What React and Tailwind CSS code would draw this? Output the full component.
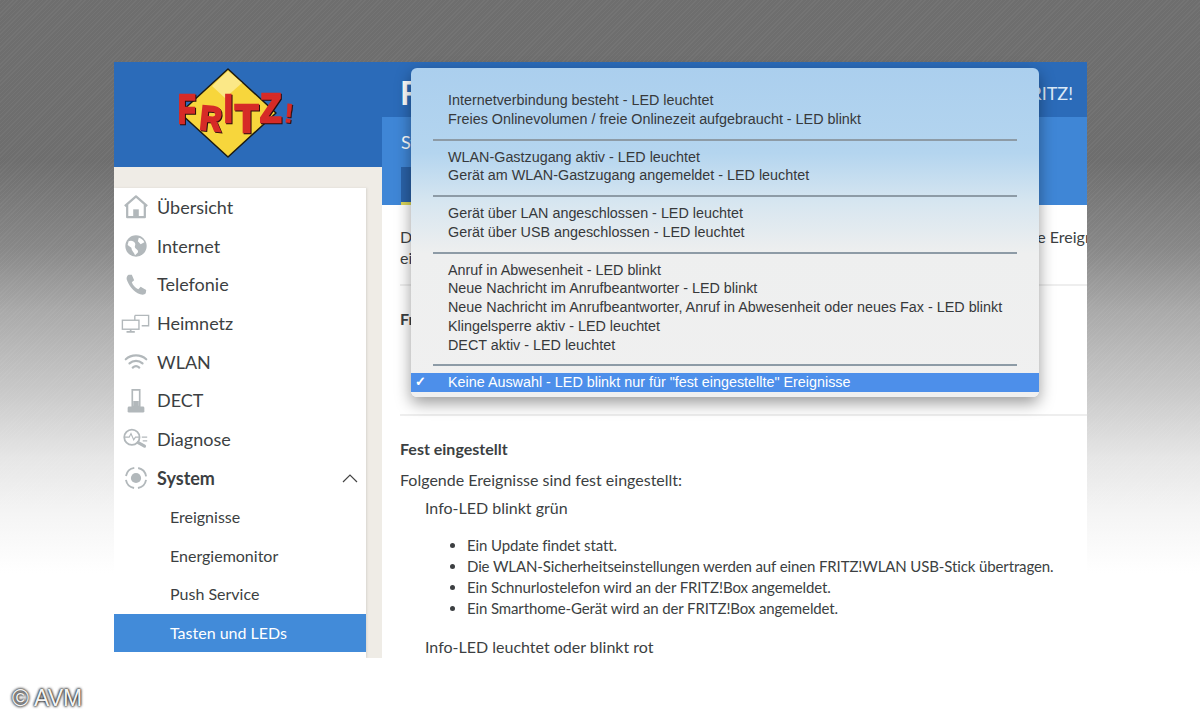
import React from "react";

const ic = "w-[26px] h-[26px] text-[#b2b8bb]";
const Home = () => (
  <svg viewBox="0 0 28 28" className={ic} fill="none" stroke="currentColor" strokeWidth="2.4">
    <path d="M2 13 14 2.500 26 13M4.500 11v14h19V11" strokeLinejoin="round" />
    <path d="M11 25v-8.500h6V25z" fill="currentColor" stroke="none" />
  </svg>
);
const Globe = () => (
  <svg viewBox="0 0 28 28" className={ic}>
    <circle cx="14" cy="14" r="11.500" fill="currentColor" />
    <path d="M6 9c3-1.500 6 0 7 2s-1 3 0 5 4 2 3 5l-3 3c-1-3-4-5-4-8l-4-3zM17 5c2 .500 5 2 6 5l-4 2-3-3z" fill="#fff" />
  </svg>
);
const Phone = () => (
  <svg viewBox="0 0 28 28" className={ic} fill="currentColor">
    <path d="M6 3 9.500 3 12 9l-2.500 2c1.200 3.200 3.500 6 7 7.500L19 16l6 3.500-.5 3.500c-1 1.500-3.500 2-6 1C11 21 6 14 4 8c-.5-2 .5-4 2-5z" />
  </svg>
);
const Net = () => (
  <svg viewBox="0 0 42 28" className="w-[29px] h-[26px] text-[#b2b8bb]" fill="none" stroke="currentColor" strokeWidth="2">
    <path d="M20 3h20v15H30" />
    <path d="M20 3v7" />
    <rect x="2" y="10" width="24" height="13" fill="#fff" />
    <path d="M14 23v3M8 27h12" strokeWidth="2.500" />
  </svg>
);
const Wifi = () => (
  <svg viewBox="0 0 28 28" className={ic} fill="none" stroke="currentColor" strokeWidth="2.400" strokeLinecap="round">
    <path d="M3 11c6-5.500 16-5.500 22 0M7 15.500c4-3.500 10-3.500 14 0M10.500 20c2-1.700 5-1.700 7 0" />
  </svg>
);
const Dect = () => (
  <svg viewBox="0 0 28 28" className={ic} fill="none" stroke="currentColor" strokeWidth="1.800">
    <path d="M10 2h8v18h-8z" />
    <rect x="5" y="20" width="18" height="6.500" rx="1.500" fill="currentColor" stroke="none" />
    <rect x="11" y="14" width="6" height="6" fill="currentColor" stroke="none" />
  </svg>
);
const Diag = () => (
  <svg viewBox="0 0 30 28" className="w-[27px] h-[26px] text-[#b2b8bb]" fill="none" stroke="currentColor" strokeWidth="2">
    <circle cx="11" cy="12" r="8.500" />
    <path d="M3 12h5l2-4 3 7 2-3h5" strokeWidth="1.300" />
    <path d="m18 18 7 4" strokeWidth="3.500" strokeLinecap="round" />
    <path d="M22 12h6M23 16h5" strokeWidth="1.300" />
  </svg>
);
const Sys = () => (
  <svg viewBox="0 0 28 28" className={ic} fill="none" stroke="currentColor">
    <circle cx="14" cy="14" r="5.500" fill="currentColor" stroke="none" />
    <circle cx="14" cy="14" r="11" strokeWidth="2" strokeDasharray="13 4.300" strokeDashoffset="-2" />
  </svg>
);

const items = [
  ["Übersicht", Home],
  ["Internet", Globe],
  ["Telefonie", Phone],
  ["Heimnetz", Net],
  ["WLAN", Wifi],
  ["DECT", Dect],
  ["Diagnose", Diag],
];

const groups = [
  ["Internetverbindung besteht - LED leuchtet", "Freies Onlinevolumen / freie Onlinezeit aufgebraucht - LED blinkt"],
  ["WLAN-Gastzugang aktiv - LED leuchtet", "Gerät am WLAN-Gastzugang angemeldet - LED leuchtet"],
  ["Gerät über LAN angeschlossen - LED leuchtet", "Gerät über USB angeschlossen - LED leuchtet"],
  [
    "Anruf in Abwesenheit - LED blinkt",
    "Neue Nachricht im Anrufbeantworter - LED blinkt",
    "Neue Nachricht im Anrufbeantworter, Anruf in Abwesenheit oder neues Fax - LED blinkt",
    "Klingelsperre aktiv - LED leuchtet",
    "DECT aktiv - LED leuchtet",
  ],
];

const L = ({ x, y, s, sx, r = 0, c, w }) => (
  <text transform={`translate(${x} ${y}) rotate(${r}) scale(${sx} 1)`} fontSize={s} strokeWidth={w}>{c}</text>
);

const Logo = () => (
  <svg viewBox="0 0 130 100" className="w-[130px] h-[100px]">
    <path d="M58 7 106 51 58 95 10 51z" fill="#f7d63c" stroke="#1c1a12" strokeWidth="1.500" strokeLinejoin="round" />
    <path d="M58 9 72 21 55 36 42 24z" fill="#fbe887" />
    <g
      className="drop-shadow-[1.500px_1.500px_0_#2b0d0d]"
      fontFamily="'Liberation Sans', sans-serif"
      fontWeight="700"
      fill="#d62b27"
      stroke="#d62b27"
      strokeWidth="2.400"
    >
      <L x={8} y={61} s={40} sx={0.72} c="F" />
      <L x={29} y={67} s={34} sx={0.88} r={6} c="R" />
      <L x={54} y={60} s={39} sx={0.8} c="I" />
      <L x={65} y={70} s={38} sx={1} c="T" />
      <L x={90} y={60} s={40} sx={0.88} c="Z" />
      <L x={113} y={60} s={27} sx={1.1} r={6} w={0.4} c="!" />
    </g>
  </svg>
);

export default function App() {
  return (
    <div className="relative w-[1200px] h-[720px] overflow-hidden pl-[114px] pt-[62px] bg-[repeating-linear-gradient(135deg,rgba(255,255,255,0.045)_0px,rgba(255,255,255,0.045)_1px,transparent_1px,transparent_3px),linear-gradient(180deg,#6e6e6e_0px,#6e6e6e_160px,#888888_248px,#aaaaaa_312px,#c8c8c8_390px,#e6e6e6_458px,#f5f5f5_514px,#ffffff_573px)] font-['Lato','Open_Sans',sans-serif]">
      <div className="w-[973px] h-[596px] flex flex-col bg-white overflow-hidden text-[#3c3f42]">
        <div className="h-[55px] shrink-0 bg-[#2b6bb9] flex">
          <div className="w-[268px] shrink-0" />
          <div className="flex-1 flex items-center justify-between pl-[18px] pr-[14px] pt-[7px] text-white">
            <span className="text-[32px] font-bold leading-none">FRITZ!Box 7590</span>
            <span className="text-[18px] text-[#dbe9f7]">MyFRITZ!</span>
          </div>
        </div>
        <div className="flex flex-1 min-h-0">
          <div className="w-[268px] shrink-0 flex flex-col -mt-[55px] relative">
            <div className="h-[105px] shrink-0 bg-[#2b6bb9] flex items-start pl-[56px]">
              <Logo />
            </div>
            <div className="flex-1 bg-[#efece6] pt-[21px] pr-[16px]">
              <div className="bg-white h-full text-[18px] shadow-[1px_0_2px_#d8d5cf]">
                {items.map(([t, I]) => (
                  <div key={t} className="h-[38.7px] flex items-center">
                    <div className="w-[43px] flex justify-center shrink-0"><I /></div>
                    <span>{t}</span>
                  </div>
                ))}
                <div className="h-[38.7px] flex items-center font-bold">
                  <div className="w-[43px] flex justify-center shrink-0"><Sys /></div>
                  <span className="flex-1">System</span>
                  <svg viewBox="0 0 16 10" className="w-[16px] h-[10px] mr-[8px]" fill="none" stroke="#444" strokeWidth="1.200"><path d="m1 9 7-7 7 7" /></svg>
                </div>
                <div className="text-[16px]">
                  <div className="h-[38.7px] flex items-center pl-[56px]">Ereignisse</div>
                  <div className="h-[38.7px] flex items-center pl-[56px]">Energiemonitor</div>
                  <div className="h-[38.7px] flex items-center pl-[56px]">Push Service</div>
                  <div className="h-[38.7px] flex items-center pl-[56px] bg-[#428bd9] text-white">Tasten und LEDs</div>
                </div>
              </div>
            </div>
          </div>
          <div className="flex-1 min-w-0 flex flex-col">
            <div className="h-[88px] shrink-0 bg-[#3f86d6] pl-[19px] flex flex-col text-white">
              <div className="h-[50px] flex items-center text-[18px]">System</div>
              <div className="w-[120px] flex-1 bg-[#2a62a8] border-b-[3px] border-[#dcd65a]" />
            </div>
            <div className="pl-[18px] text-[16px] overflow-hidden flex-1">
              <div className="pt-[21px] pb-[16px] border-b-2 border-[#eeeeee] leading-[21px]">
                <div className="whitespace-nowrap">Die Info-LED der FRITZ!Box kann verschiedene Zustände anzeigen und hier über festgelegte Ereignisse</div>
                <div className="whitespace-nowrap">eine Rückmeldung geben.</div>
              </div>
              <div className="h-[130px] border-b-2 border-[#eeeeee] pt-[21px] font-bold">Frei einstellbar</div>
              <div className="pt-[22px] font-bold leading-[21px]">Fest eingestellt</div>
              <div className="pt-[10px] leading-[21px]">Folgende Ereignisse sind fest eingestellt:</div>
              <div className="pl-[25px] pt-[7px] leading-[21px]">
                <div>Info-LED blinkt grün</div>
                <ul className="list-disc pl-[42px] pt-[17px] text-[15px] tracking-[-0.12px]">
                  <li>Ein Update findet statt.</li>
                  <li>Die WLAN-Sicherheitseinstellungen werden auf einen FRITZ!WLAN USB-Stick übertragen.</li>
                  <li>Ein Schnurlostelefon wird an der FRITZ!Box angemeldet.</li>
                  <li>Ein Smarthome-Gerät wird an der FRITZ!Box angemeldet.</li>
                </ul>
                <div className="pt-[17px]">Info-LED leuchtet oder blinkt rot</div>
              </div>
            </div>
          </div>
        </div>
      </div>

      <div className="absolute left-[411px] top-[68px] w-[628px] h-[329px] rounded-[6px] pt-[23px] bg-[linear-gradient(180deg,#abcfee_0px,#b4d5ef_85px,#d7e6f0_135px,#eeefef_185px,#f0f0f0_100%)] shadow-[0_6px_16px_rgba(0,0,0,0.4)] font-['Liberation_Sans',sans-serif] text-[14.35px] leading-[18.75px] text-[#37393b]">
        {groups.map((g, i) => (
          <div key={i}>
            <div className="pl-[37px]">
              {g.map((l) => <div key={l}>{l}</div>)}
            </div>
            <div className="mx-[22px] mt-[10px] mb-[7px] h-[2px] bg-[#8d9ba6]" />
          </div>
        ))}
        <div className="h-[19px] bg-[#4d8fea] text-white flex items-center">
          <span className="w-[37px] pl-[4px] text-[13px] font-bold">✓</span>
          <span>Keine Auswahl - LED blinkt nur für "fest eingestellte" Ereignisse</span>
        </div>
      </div>

      <div className="absolute left-[12px] top-[685px] font-['Liberation_Sans',sans-serif] text-[23px] leading-[26px] text-[#f4f4f4] [text-shadow:0_0_3px_#333,0_0_3px_#333,0_0_2px_#333]">© AVM</div>
    </div>
  );
}
